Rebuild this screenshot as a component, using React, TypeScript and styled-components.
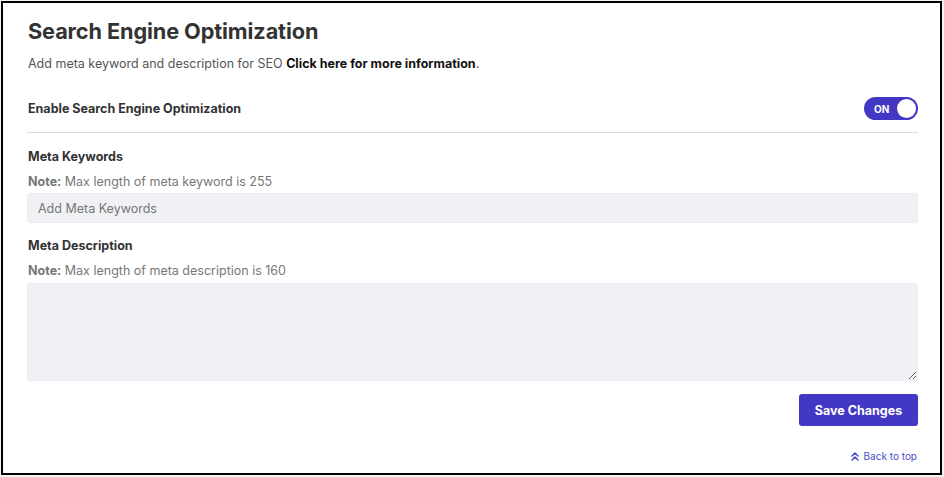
import React, { useState } from "react";
import styled, { createGlobalStyle } from "styled-components";

const Global = createGlobalStyle`
  html, body { margin: 0; padding: 0; background: #f3f3f3; }
  body { font-family: Inter, "Noto Sans", sans-serif; color: #333; }
  * { box-sizing: border-box; }
`;

const Frame = styled.div`
  margin: 1px;
  width: 941px;
  height: 474px;
  border: 2px solid #000;
  background: #fff;
  padding: 13px 22px 0 24px;
  display: flex;
  flex-direction: column;
`;

const Title = styled.h1`
  margin: 0 0 0 1px;
  font-size: 21.7px;
  font-weight: 700;
  color: #333;
  line-height: 30px;
  letter-spacing: -0.1px;
`;

const Subtitle = styled.p`
  margin: 9px 0 0 1px;
  font-size: 12.5px;
  line-height: 18px;
  color: #555;
  b { color: #111; font-weight: 700; }
`;

const ToggleRow = styled.div`
  margin-top: 24px;
  display: flex;
  align-items: center;
  justify-content: space-between;
  padding: 0 0 12px 1px;
  border-bottom: 1px solid #dcdcdc;
`;

const Label = styled.div<{ $indent?: boolean }>`
  font-size: 12.5px;
  font-weight: 700;
  color: #333;
  line-height: 18px;
  padding-left: ${(p) => (p.$indent ? "1px" : "0")};
`;

const Switch = styled.button<{ $on: boolean }>`
  width: 54px;
  height: 23px;
  border-radius: 12px;
  border: none;
  background: ${(p) => (p.$on ? "#4338c4" : "#bbb")};
  display: flex;
  align-items: center;
  justify-content: space-between;
  padding: 0 2px 0 10px;
  cursor: pointer;
  font-family: inherit;
  span {
    color: #fff;
    font-size: 10px;
    font-weight: 700;
  }
  i {
    width: 19px;
    height: 19px;
    border-radius: 50%;
    background: #fff;
    display: block;
  }
`;

const Field = styled.div<{ $top: number }>`
  margin-top: ${(p) => p.$top}px;
  display: flex;
  flex-direction: column;
`;

const Note = styled.div`
  margin-top: 7px;
  padding-left: 1px;
  font-size: 12.5px;
  line-height: 18px;
  color: #777;
  b { font-weight: 700; }
`;

const Input = styled.input`
  margin-top: 2px;
  height: 30px;
  border: 1px solid #eceef2;
  border-radius: 3px;
  background: #f0f1f4;
  padding: 0 10px;
  font-family: inherit;
  font-size: 12.5px;
  color: #333;
  outline: none;
  &::placeholder { color: #777; }
`;

const TextArea = styled.textarea`
  margin-top: 3px;
  height: 98px;
  border: 1px solid #eceef2;
  border-radius: 3px;
  background: #f0f1f4;
  padding: 8px 10px;
  font-family: inherit;
  font-size: 12.5px;
  outline: none;
`;

const Actions = styled.div`
  margin-top: 13px;
  display: flex;
  justify-content: flex-end;
`;

const SaveButton = styled.button`
  width: 119px;
  height: 32px;
  border: none;
  border-radius: 3px;
  background: #4338c4;
  color: #fff;
  font-family: inherit;
  font-size: 12.5px;
  font-weight: 700;
  cursor: pointer;
`;

const BackToTop = styled.a`
  margin-top: 24px;
  align-self: flex-end;
  margin-right: 1px;
  display: flex;
  align-items: center;
  gap: 5px;
  font-size: 10px;
  color: #4a4fc8;
  text-decoration: none;
  svg { display: block; }
`;

export default function App() {
  const [on, setOn] = useState(true);
  return (
    <>
      <Global />
      <Frame>
        <Title>Search Engine Optimization</Title>
        <Subtitle>
          Add meta keyword and description for SEO <b>Click here for more information</b>.
        </Subtitle>
        <ToggleRow>
          <Label>Enable Search Engine Optimization</Label>
          <Switch $on={on} onClick={() => setOn(!on)}>
            <span>{on ? "ON" : "OFF"}</span>
            <i />
          </Switch>
        </ToggleRow>
        <Field $top={15}>
          <Label $indent>Meta Keywords</Label>
          <Note><b>Note:</b> Max length of meta keyword is 255</Note>
          <Input placeholder="Add Meta Keywords" />
        </Field>
        <Field $top={14}>
          <Label $indent>Meta Description</Label>
          <Note><b>Note:</b> Max length of meta description is 160</Note>
          <TextArea />
        </Field>
        <Actions>
          <SaveButton>Save Changes</SaveButton>
        </Actions>
        <BackToTop href="#">
          <svg width="8" height="9" viewBox="0 0 8 9" fill="none" stroke="#4a4fc8" strokeWidth="1.6" strokeLinecap="round" strokeLinejoin="round">
            <path d="M1 4 L4 1 L7 4" />
            <path d="M1 8 L4 5 L7 8" />
          </svg>
          Back to top
        </BackToTop>
      </Frame>
    </>
  );
}
